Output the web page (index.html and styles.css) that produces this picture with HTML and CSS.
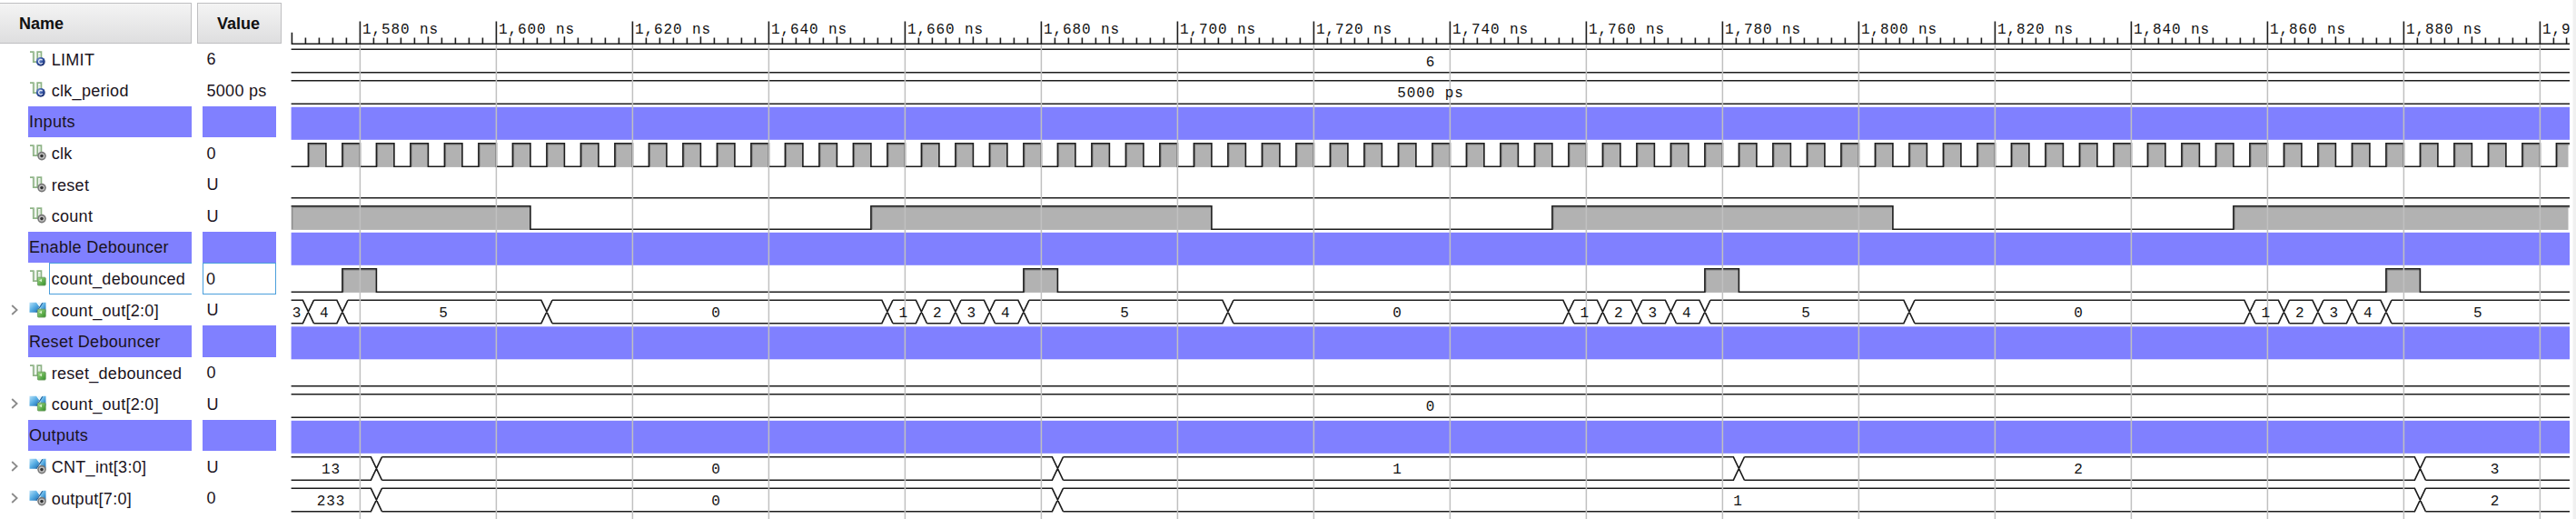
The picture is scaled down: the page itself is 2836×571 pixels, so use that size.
FILE: index.html
```
<!DOCTYPE html>
<html lang="en">
<head>
<meta charset="utf-8">
<title>Waveform viewer</title>
<link rel="stylesheet" href="styles.css">
</head>
<body>
<svg class="defs" width="0" height="0" aria-hidden="true">
  <defs>
    <linearGradient id="blue" x1="0" y1="0" x2="0.9" y2="1"><stop offset="0" stop-color="#b4e0f8"/><stop offset="0.5" stop-color="#58aee4"/><stop offset="1" stop-color="#1f6fb4"/></linearGradient>
    <linearGradient id="green" x1="0" y1="0" x2="1" y2="1"><stop offset="0" stop-color="#a6dc8c"/><stop offset="1" stop-color="#2f8d22"/></linearGradient>
    <radialGradient id="navy" cx="0.35" cy="0.3" r="0.8"><stop offset="0" stop-color="#7f9ad6"/><stop offset="0.5" stop-color="#2f4f9e"/><stop offset="1" stop-color="#1c2c66"/></radialGradient>
    <symbol id="wire" viewBox="0 0 20 20"><path d="M1 2.2H4.8V13.2H9.2V2.2H13.4V11" fill="none" stroke="#8fb487" stroke-width="1.8"/><path d="M6.3 2V11.5M11.2 4V12" fill="none" stroke="#d3e2cf" stroke-width="1"/></symbol>
    <symbol id="bus" viewBox="0 0 20 20"><path d="M0.5 1.8H8L11.2 6.2L8 12.8H0.5Z" fill="url(#blue)"/><path d="M18.5 1.8H15.2L11.8 6.2L14 12.5H18.5Z" fill="url(#blue)"/><path d="M9.2 1.8H13.9L11.5 5.2Z" fill="#e6f4fc"/><path d="M8 12.8L14.8 2.2" stroke="#1d5f9a" stroke-width="1.2"/></symbol>
    <symbol id="const" viewBox="0 0 20 20"><circle cx="12.8" cy="12.8" r="4.9" fill="url(#navy)"/><path d="M14.6 11.2A2.3 2.3 0 1 0 14.8 14" fill="none" stroke="#e4eaf7" stroke-width="1.3"/></symbol>
    <symbol id="signal" viewBox="0 0 20 20"><circle cx="14" cy="13.6" r="4.8" fill="#777"/><circle cx="14" cy="13.6" r="3.2" fill="#c4c4c4"/><circle cx="14" cy="13.6" r="1.8" fill="#333"/></symbol>
    <symbol id="port" viewBox="0 0 20 20"><rect x="9.4" y="9.2" width="8.8" height="8.8" rx="1" fill="url(#green)" stroke="#6c9c62" stroke-width="0.9"/><path d="M11 12.5L14 10.8V14.2Z" fill="#d8f2cc"/></symbol>
  </defs>
</svg>
<main class="viewer">
  <section class="names">
    <h2 class="head">Name</h2>
    <ul class="list" id="names"></ul>
  </section>
  <section class="values">
    <h2 class="head">Value</h2>
    <ul class="list" id="values"></ul>
  </section>
  <section class="plot">
    <svg id="wave" class="wave" viewBox="320 0 2511 571" width="2511" height="571"></svg>
  </section>
  <div class="edge"></div>
</main>
<script src="wave.js"></script>
</body>
</html>
```
FILE: styles.css
```
body {
  margin: 0;
  background: #fff;
  font-family: "Liberation Sans", Arial, sans-serif;
  font-size: 18px;
  color: #1a1320;
  overflow: hidden;
}
.defs { display: block; }
.viewer { display: flex; height: 571px; overflow: hidden; }
.names { flex: none; width: 211px; margin-right: 6px; }
.values { flex: none; width: 93px; margin-right: 10px; }
.head {
  box-sizing: border-box;
  height: 45px;
  margin: 2.5px 0 0;
  border: 1.5px solid #bfbfc1;
  background: linear-gradient(#f4f4f4, #dededf);
  font-size: 18px;
  line-height: 44px;
  font-weight: bold;
  color: #111;
}
.names .head { border-left: 0; padding-left: 21px; }
.values .head { padding-left: 21px; }
.list { list-style: none; margin: 0; padding: 0; }
.row {
  box-sizing: border-box;
  display: flex;
  align-items: center;
  height: 34.5px;
  white-space: nowrap;
}
.names .row { padding-left: 12px; }
.values .row { margin: 0 6px; padding: 2px 0 0 4.5px; letter-spacing: 0.3px; }
.arrow { flex: none; width: 8px; height: 12px; margin-right: 12px; }
.arrow path { fill: none; stroke: #8a8a8a; stroke-width: 1.8; }
.icon { flex: none; width: 20px; height: 20px; }
.label {
  box-sizing: border-box;
  flex: 1;
  height: 34.5px;
  margin-left: 2px;
  padding: 1px 0 0 2.7px;
  line-height: 34.5px;
  letter-spacing: 0.3px;
}
.names .group { margin-left: 31px; padding: 2px 0 0 1px; background: #8080ff; letter-spacing: 0.3px; }
.values .group { background: #8080ff; }
.selected .label { border: 1.5px solid #4b9fdc; border-right: 0; padding-left: 1.5px; line-height: 32px; }
.values .selected { border: 1.5px solid #4b9fdc; padding-left: 3px; }
.plot { flex: none; width: 2511px; }
.wave { display: block; }
.edge { width: 4px; margin-left: auto; box-sizing: border-box; border-left: 1px solid #f8f8f8; background: #f0f0f0; }
.band { fill: #8080ff; }
.fill { fill: #b2b2b2; }
.shade { fill: none; stroke: #808080; stroke-width: 1; }
.line { fill: none; stroke: #1c1c1c; stroke-width: 1.6; }
.grid { stroke: #c0c0c0; stroke-width: 1.5; }
.text {
  font-family: "Liberation Mono", "Courier New", monospace;
  font-size: 16px;
  letter-spacing: 0.9px;
  fill: #111;
}
.mid { text-anchor: middle; }
```
FILE: wave.js
```
const LEFT = 320.6, RIGHT = 2829, TOP = 47.4, PITCH = 34.5;
const x = t => 396.4 + Math.floor((t - 1580) * 5) * 1.5;

const clk = [];
for (let t = 1572.5; t < 1905; t += 5) clk.push([t, t + 2.5]);

const cycle = [[1572.5, '4'], [1577.5, '5'], [1607.5, '0'], [1657.5, '1'], [1662.5, '2'], [1667.5, '3']];
const counts = [[0, '3']];
for (let n = 0; n < 4; n++)
  for (const [t, v] of cycle) if (t + n * 100 < 1904) counts.push([t + n * 100, v]);

const rows = [
  { name: 'LIMIT', value: '6', icon: 'wire', badge: 'const', bus: [[0, '6']] },
  { name: 'clk_period', value: '5000 ps', icon: 'wire', badge: 'const', bus: [[0, '5000 ps']] },
  { name: 'Inputs', group: true },
  { name: 'clk', value: '0', icon: 'wire', badge: 'signal', high: clk },
  { name: 'reset', value: 'U', icon: 'wire', badge: 'signal', high: [] },
  { name: 'count', value: 'U', icon: 'wire', badge: 'signal', high: [[0, 1605], [1655, 1705], [1755, 1805], [1855, 9999]] },
  { name: 'Enable Debouncer', group: true },
  { name: 'count_debounced', value: '0', icon: 'wire', badge: 'port', selected: true,
    high: [[1577.5, 1582.5], [1677.5, 1682.5], [1777.5, 1782.5], [1877.5, 1882.5]] },
  { name: 'count_out[2:0]', value: 'U', icon: 'bus', badge: 'port', bus: counts },
  { name: 'Reset Debouncer', group: true },
  { name: 'reset_debounced', value: '0', icon: 'wire', badge: 'port', high: [] },
  { name: 'count_out[2:0]', value: 'U', icon: 'bus', badge: 'port', bus: [[0, '0']] },
  { name: 'Outputs', group: true },
  { name: 'CNT_int[3:0]', value: 'U', icon: 'bus', badge: 'signal', bus: [[0, '13'], [1582.5, '0'], [1682.5, '1'], [1782.5, '2'], [1882.5, '3']] },
  { name: 'output[7:0]', value: '0', icon: 'bus', badge: 'signal', bus: [[0, '233'], [1582.5, '0'], [1682.5, '1'], [1882.5, '2']] }
];

let names = '', values = '', shapes = '', texts = '';

rows.forEach((r, i) => {
  const y = TOP + PITCH * i, hi = y + 6.9, lo = y + 32.3;
  const sel = r.selected ? ' selected' : '';
  if (r.group) {
    names += `<li class="row group">${r.name}</li>`;
    values += '<li class="row group"></li>';
    shapes += `<rect class="band" x="${LEFT}" y="${y + 1.4}" width="${RIGHT - LEFT}" height="36"/>`;
    return;
  }
  const arrow = r.icon === 'bus' ? '<path d="M1.2 1L6.6 6L1.2 11"/>' : '';
  names += `<li class="row${sel}"><svg class="arrow" viewBox="0 0 8 12">${arrow}</svg>` +
    `<svg class="icon"><use href="#${r.icon}"/><use href="#${r.badge}"/></svg><span class="label">${r.name}</span></li>`;
  values += `<li class="row${sel}">${r.value}</li>`;

  if (r.high) {
    let d = `M${LEFT} `, first = true;
    for (const [a, b] of r.high) {
      const xa = Math.max(LEFT, x(a)), xb = Math.min(RIGHT, x(b));
      shapes += `<rect class="fill" x="${xa}" y="${hi}" width="${Math.min(xb, RIGHT - 1.5) - xa}" height="${lo - hi + 0.7}"/>`;
      shapes += `<path class="shade" d="M${xa + 1.2} ${lo}V${hi + 1.2}H${Math.min(xb, RIGHT)}"/>`;
      d += first && a === 0 ? `${hi}` : (first ? `${lo}` : '') + `H${xa}V${hi}`;
      d += `H${xb}` + (xb < RIGHT ? `V${lo}` : '');
      first = false;
    }
    if (first) d += lo;
    const open = r.high.length && x(r.high[r.high.length - 1][1]) >= RIGHT;
    if (!open) d += `H${RIGHT}`;
    shapes += `<path class="line" d="${d}"/>`;
  } else {
    const n = r.bus.length;
    let top = `M${LEFT} ${hi}`, bottom = `M${LEFT} ${lo}`;
    r.bus.forEach(([t, label], k) => {
      const a = k ? x(t) : LEFT, b = k + 1 < n ? x(r.bus[k + 1][0]) : RIGHT;
      if (k + 1 < n) {
        top += `H${b - 6}L${b + 6} ${lo}M${b + 6} ${hi}`;
        bottom += `H${b - 6}L${b + 6} ${hi}M${b + 6} ${lo}`;
      } else { top += `H${b}`; bottom += `H${b}`; }
      const shift = b === RIGHT ? 0.2 : k ? -0.9 : -3;
      texts += `<text class="text mid" x="${(a + b) / 2 + shift}" y="${y + 25.4}">${label}</text>`;
    });
    shapes += `<path class="line" d="${top}${bottom}"/>`;
  }
});

let ruler = `M${LEFT} 48.3H${RIGHT}`, grid = '';
for (let t = 1570; t <= 1903; t += 2) {
  const px = x(t), major = t % 20 === 0;
  ruler += `M${px} 48.3V${t === 1570 ? 35.7 : major ? 23.6 : t % 10 === 0 ? 40.3 : 41.6}`;
  if (major) {
    const label = t - 1000 === 900 ? '1,90' : `1,${t - 1000} ns`;
    grid += `M${px} 49V571`;
    texts += `<text class="text" x="${px + 2.6}" y="37">${label}</text>`;
  }
}
ruler += 'M2825.6 48.3V41.6';

document.getElementById('names').innerHTML = names;
document.getElementById('values').innerHTML = values;
document.getElementById('wave').innerHTML =
  `${shapes}<path class="line" d="${ruler}"/><path class="grid" d="${grid}"/>${texts}`;
```
